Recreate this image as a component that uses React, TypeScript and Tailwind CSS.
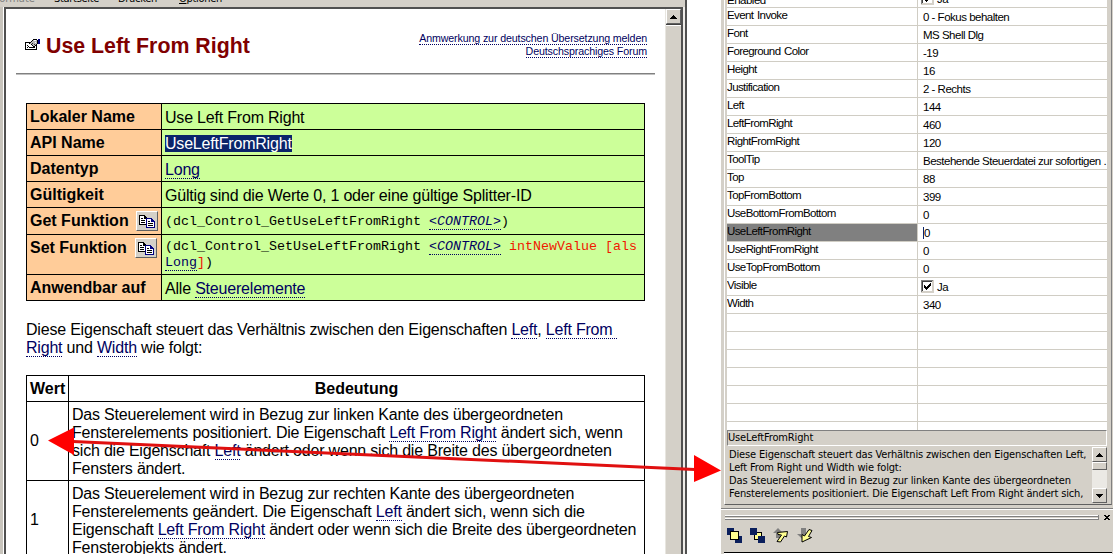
import React from 'react';

type Property = {
  name: string;
  value: string;
  checked?: boolean;
  selected?: boolean;
};

const properties: Property[] = [
  { name: 'Event Invoke', value: '0 - Fokus behalten' },
  { name: 'Font', value: 'MS Shell Dlg' },
  { name: 'Foreground Color', value: '-19' },
  { name: 'Height', value: '16' },
  { name: 'Justification', value: '2 - Rechts' },
  { name: 'Left', value: '144' },
  { name: 'LeftFromRight', value: '460' },
  { name: 'RightFromRight', value: '120' },
  { name: 'ToolTip', value: 'Bestehende Steuerdatei zur sofortigen .' },
  { name: 'Top', value: '88' },
  { name: 'TopFromBottom', value: '399' },
  { name: 'UseBottomFromBottom', value: '0' },
  { name: 'UseLeftFromRight', value: '0', selected: true },
  { name: 'UseRightFromRight', value: '0' },
  { name: 'UseTopFromBottom', value: '0' },
  { name: 'Visible', value: 'Ja', checked: true },
  { name: 'Width', value: '340' },
  { name: '', value: '' },
  { name: '', value: '' },
  { name: '', value: '' },
  { name: '', value: '' },
  { name: '', value: '' },
  { name: '', value: '' },
];

function Link({ children }: { children: React.ReactNode }) {
  return <span className="border-b border-dotted border-[#000060] text-[#000060]">{children}</span>;
}

function PropertyIcon() {
  return (
    <svg width="16" height="12" viewBox="0 0 16 12" shapeRendering="crispEdges">
      <path d="M0 3h12v8H0z" fill="#000" />
      <path d="M1 4h10v6H1z" fill="#fff" />
      <path d="M2 6h1v1H2zM2 8h1v1H2zM4 8h6v1H4zM3 7h1v1H3z" fill="#000" />
      <path d="M4 4h1V3h1V2h1V1h1V0h4v1h1v4h-1v1h-1v1h-1v1H8V7H7V6H6V5H4z" fill="#000" />
      <path d="M5 4h1V3h1V2h1V1h4v4h-1v1h-1v1H8V6H7V5H5z" fill="#b8b8b8" />
      <path d="M7 4h1v1H7zM9 5h1v1H9z" fill="#303030" />
      <path d="M9 1h2v1H9zM10 3h1v1h-1z" fill="#fff" />
      <path d="M13 0h2v5h-2z" fill="#000080" />
    </svg>
  );
}

function CopyButton() {
  return (
    <span className="flex h-5 w-[22px] shrink-0 items-center justify-center border border-t-white border-r-[#606060] border-b-[#606060] border-l-white bg-[#d4d0c8]">
      <svg width="16" height="13" viewBox="0 0 16 13" shapeRendering="crispEdges">
        <path d="M0 0h6v1h1v1h1v8H0z" fill="#000" />
        <path d="M1 1h4v3h2v5H1z" fill="#fff" />
        <path d="M2 3h2v1H2zM2 5h4v1H2zM2 7h4v1H2z" fill="#000" />
        <path d="M7 3h6v1h1v1h1v1h1v7H7z" fill="#000080" />
        <path d="M8 4h4v3h3v5H8z" fill="#fff" />
        <path d="M9 6h2v1H9zM9 8h5v1H9zM9 10h5v1H9z" fill="#000" />
      </svg>
    </span>
  );
}

function Checkbox() {
  return (
    <svg width="13" height="13" viewBox="0 0 13 13" shapeRendering="crispEdges" className="shrink-0">
      <path d="M0 0h13v13H0z" fill="#d4d0c8" />
      <path d="M0 0h12v1H1v11H0z" fill="#808080" />
      <path d="M1 1h10v1H2v9H1z" fill="#404040" />
      <path d="M2 2h9v9H2z" fill="#fff" />
      <path d="M3 5h1v1h1v1h1V6h1V5h1V4h1V3h1v3H9v1H8v1H7v1H6v1H5V9H4V8H3z" fill="#000" />
    </svg>
  );
}

function ScrollButton({ down = false }: { down?: boolean }) {
  return (
    <span className="flex h-[15px] w-[15px] shrink-0 items-center justify-center border border-t-white border-r-[#606060] border-b-[#606060] border-l-white bg-[#d4d0c8]">
      <svg width="7" height="4" viewBox="0 0 7 4" shapeRendering="crispEdges">
        {down ? (
          <path d="M0 0h7v1H6v1H5v1H4v1H3V3H2V2H1V1H0z" />
        ) : (
          <path d="M3 0h1v1h1v1h1v1h1v1H0V3h1V2h1V1h1z" />
        )}
      </svg>
    </span>
  );
}

function InfoRow({ label, height, button, children }: { label: string; height: string; button?: string; children: React.ReactNode }) {
  return (
    <div className={`flex border-b border-black ${height}`}>
      <div className="flex w-[135px] shrink-0 border-r border-black bg-[#ffcc99] pl-[3px] font-bold tracking-normal">
        <span className="pt-[4px]">{label}</span>
        {button && (
          <span className={button}>
            <CopyButton />
          </span>
        )}
      </div>
      <div className="grow bg-[#ccff99] pl-[3px]">{children}</div>
    </div>
  );
}

function HelpPage() {
  return (
    <div className="flex h-[545px] grow flex-col overflow-hidden bg-white pl-[10px] text-[16px] leading-[18px] tracking-[-0.2px] text-black">
      <div className="flex h-[64px] w-[639px] shrink-0 pl-[9px]">
        <div className="pt-[30px]">
          <PropertyIcon />
        </div>
        <h1 className="pt-[25px] pl-[5px] text-[21.33px] leading-6 font-bold tracking-normal whitespace-nowrap text-[#800000]">
          Use Left From Right
        </h1>
        <div className="ml-auto pt-[23px] pr-2 text-right text-[10.67px] leading-[13px] tracking-[-0.13px] whitespace-nowrap">
          <div>
            <Link>Anmwerkung zur deutschen Übersetzung melden</Link>
          </div>
          <div>
            <Link>Deutschsprachiges Forum</Link>
          </div>
        </div>
      </div>
      <div className="h-[2px] w-[639px] shrink-0 border-t border-[#808080] bg-[#c0c0c0]" />

      <div className="mt-[28px] ml-[10px] w-[619px] shrink-0 border border-b-0 border-black whitespace-nowrap">
        <InfoRow label="Lokaler Name" height="h-[26px]">
          <div className="pt-[5px]">Use Left From Right</div>
        </InfoRow>
        <InfoRow label="API Name" height="h-[26px]">
          <div className="pt-[5px]">
            <span className="bg-[#0a246a] text-white">UseLeftFromRight</span>
          </div>
        </InfoRow>
        <InfoRow label="Datentyp" height="h-[26px]">
          <div className="pt-[5px]">
            <Link>Long</Link>
          </div>
        </InfoRow>
        <InfoRow label="Gültigkeit" height="h-[26px]">
          <div className="pt-[5px]">Gültig sind die Werte 0, 1 oder eine gültige Splitter-ID</div>
        </InfoRow>
        <InfoRow label="Get Funktion" height="h-[27px]" button="ml-auto pt-[3px] pr-[3px]">
          <div className="pt-[6px] font-['Liberation_Mono'] text-[13.33px] leading-4 tracking-normal">
            (dcl_Control_GetUseLeftFromRight <Link><i>&lt;CONTROL&gt;</i></Link>)
          </div>
        </InfoRow>
        <InfoRow label="Set Funktion" height="h-[40px]" button="ml-auto pt-[3px] pr-[4px]">
          <div className="pt-[4px] font-['Liberation_Mono'] text-[13.33px] leading-4 tracking-normal">
            (dcl_Control_SetUseLeftFromRight <Link><i>&lt;CONTROL&gt;</i></Link>{' '}
            <span className="text-[#f01800]">intNewValue [als</span>
            <br />
            <Link>Long</Link>
            <span className="text-[#f01800]">]</span>)
          </div>
        </InfoRow>
        <InfoRow label="Anwendbar auf" height="h-[26px]">
          <div className="pt-[5px]">
            Alle <Link>Steuerelemente</Link>
          </div>
        </InfoRow>
      </div>

      <p className="mt-[20px] ml-[10px] shrink-0 whitespace-nowrap">
        Diese Eigenschaft steuert das Verhältnis zwischen den Eigenschaften <Link>Left</Link>, <Link>Left From&nbsp;</Link>
        <br />
        <Link>Right</Link> und <Link>Width</Link> wie folgt:
      </p>

      <div className="mt-[18px] ml-[10px] w-[619px] shrink-0 border border-b-0 border-black whitespace-nowrap">
        <div className="flex h-[26px] border-b border-black font-bold tracking-normal">
          <div className="w-[42px] shrink-0 border-r border-black pt-[4px] pl-[3px]">Wert</div>
          <div className="grow pt-[4px] text-center">Bedeutung</div>
        </div>
        <div className="flex h-[79px] border-b border-black">
          <div className="flex w-[42px] shrink-0 items-center border-r border-black pl-[3px]">0</div>
          <div className="pt-[4px] pl-[3px]">
            Das Steuerelement wird in Bezug zur linken Kante des übergeordneten
            <br />
            Fensterelements positioniert. Die Eigenschaft <Link>Left From Right</Link> ändert sich, wenn
            <br />
            sich die Eigenschaft <Link>Left</Link> ändert oder wenn sich die Breite des übergeordneten
            <br />
            Fensters ändert.
          </div>
        </div>
        <div className="flex h-[79px] border-b border-black">
          <div className="flex w-[42px] shrink-0 items-center border-r border-black pl-[3px]">1</div>
          <div className="pt-[4px] pl-[3px]">
            Das Steuerelement wird in Bezug zur rechten Kante des übergeordneten
            <br />
            Fensterelements geändert. Die Eigenschaft <Link>Left</Link> ändert sich, wenn sich die
            <br />
            Eigenschaft <Link>Left From Right</Link> ändert oder wenn sich die Breite des übergeordneten
            <br />
            Fensterobjekts ändert.
          </div>
        </div>
      </div>
    </div>
  );
}

function HelpWindow() {
  return (
    <div className="flex w-[687px] shrink-0 flex-col border-r-2 border-[#505050] bg-[#d4d0c8]">
      <div className="flex h-[7px] shrink-0 overflow-hidden font-['DejaVu_Sans_Condensed'] text-[11px] leading-[13px] whitespace-nowrap">
        <span className="-mt-[8px] -ml-[6px] w-[60px] text-[#808080]">Formate</span>
        <span className="-mt-[8px] w-[64px] tracking-[-0.3px]">Startseite</span>
        <span className="-mt-[8px] w-[61px] tracking-[-0.3px]">Drucken</span>
        <span className="-mt-[8px] tracking-[-0.3px]">
          <u>O</u>ptionen
        </span>
      </div>
      <div className="flex grow">
        <div className="w-[4px] shrink-0 border-r border-white bg-[#c8c4bc]" />
        <div className="flex w-[679px] shrink-0 border-t-2 border-r-2 border-l-2 border-[#505050]">
          <HelpPage />
          <div className="flex w-4 shrink-0 flex-col border-l border-[#e8e6e0] bg-[#d4d0c8]">
            <ScrollButton />
            <div className="h-[2px] border-t border-[#404040] bg-white" />
          </div>
        </div>
        <div className="w-[2px] bg-[#eeece8]" />
      </div>
    </div>
  );
}

function PropertyGrid() {
  return (
    <div className="h-[430px] w-[380px] overflow-hidden bg-white font-['Liberation_Sans'] text-[11.5px] leading-[14px] tracking-[-0.5px] whitespace-nowrap">
      <div className="flex h-2 border-b border-[#d0cdc4]">
        <div className="-mt-[7px] h-[14px] w-[191px] shrink-0 border-r border-[#d0cdc4]">Enabled</div>
        <div className="-mt-[8px] flex pl-[3px]">
          <Checkbox />
          <span className="pl-[3px]">Ja</span>
        </div>
      </div>
      {properties.map((property, index) => (
        <div key={index} className="flex h-[18px] border-b border-[#d0cdc4]">
          <div
            className={`w-[191px] shrink-0 border-r border-[#d0cdc4] tracking-[-0.6px] [word-spacing:1px] ${property.selected ? 'bg-[#808080]' : ''}`}
          >
            {property.name}
          </div>
          {property.checked ? (
            <div className="flex pt-[2px] pl-[3px]">
              <Checkbox />
              <span className="pl-[3px]">{property.value}</span>
            </div>
          ) : (
            <div className="pt-[2px] pl-[5px]">
              <span className={property.selected ? 'border-l border-[#0a246a]' : ''}>{property.value}</span>
            </div>
          )}
        </div>
      ))}
      <div className="ml-[190px] h-2 w-px bg-[#d0cdc4]" />
    </div>
  );
}

function Description() {
  return (
    <div className="w-[380px] font-['DejaVu_Sans_Condensed'] text-[11px] leading-[13px] whitespace-nowrap">
      <div className="h-4 border border-t-[#808080] border-r-white border-b-white border-l-[#808080] tracking-[-0.15px]">UseLeftFromRight</div>
      <div className="flex h-[57px] pt-[1px]">
        <div className="grow overflow-hidden pt-[1px] pl-[2px] tracking-[-0.15px]">
          <div>Diese Eigenschaft steuert das Verhältnis zwischen den Eigenschaften Left,</div>
          <div>Left From Right und Width wie folgt:</div>
          <div>Das Steuerelement wird in Bezug zur linken Kante des übergeordneten</div>
          <div>Fensterelements positioniert. Die Eigenschaft Left From Right ändert sich,</div>
        </div>
        <div className="flex w-[15px] shrink-0 flex-col bg-[#ebe9e4]">
          <ScrollButton />
          <div className="h-2 border border-t-white border-r-[#606060] border-b-[#606060] border-l-white bg-[#d4d0c8]" />
          <div className="mt-auto flex">
            <ScrollButton down />
          </div>
        </div>
      </div>
    </div>
  );
}

function BringToFrontIcon() {
  return (
    <svg width="15" height="15" viewBox="0 0 15 15" shapeRendering="crispEdges">
      <path d="M0 0h7v7H0zM8 8h7v7H8z" fill="#0a1f5c" />
      <path d="M3 3h9v9H3z" fill="#000" />
      <path d="M4 4h7v7H4z" fill="#ffff90" />
    </svg>
  );
}

function SendToBackIcon() {
  return (
    <svg width="15" height="15" viewBox="0 0 15 15" shapeRendering="crispEdges">
      <path d="M4 4h8v8H4z" fill="#000" />
      <path d="M5 5h6v6H5z" fill="#ffff90" />
      <path d="M0 0h7v7H0zM8 8h7v7H8z" fill="#0a1f5c" />
    </svg>
  );
}

function MoveUpIcon() {
  return (
    <svg width="16" height="15" viewBox="0 0 16 15">
      <path d="M0 5l5-5 5 5H7v5H3V5z" fill="#808080" />
      <path d="M4.500 4.500l10-1-1 5.500-2-1-4 6-3.500-.5 4.500-6.500-3.500-.5z" fill="#ffff90" stroke="#000" />
    </svg>
  );
}

function MoveDownIcon() {
  return (
    <svg width="16" height="15" viewBox="0 0 16 15">
      <path d="M4 0h5v6h3l-5.500 6L0 6h4z" fill="#808080" />
      <path d="M12 1.500l3 1-3.500 6 3 1-9.500 4.500v-7.500l2.500 1.500z" fill="#ffff90" stroke="#000" />
    </svg>
  );
}

function PropertyPanel() {
  return (
    <div className="flex w-[392px] shrink-0 flex-col bg-[#d4d0c8] pl-[3px]">
      <div className="h-[505px] w-[388px] shrink-0 border-r border-b border-l border-r-[#808080] border-b-[#606060] border-l-white pl-[2px]">
        <PropertyGrid />
        <Description />
      </div>
      <div className="mt-[3px] -ml-[3px] h-[2px] shrink-0 border-t border-[#808080] bg-white" />
      <div className="flex h-[15px] shrink-0 items-center pl-px">
        <div className="flex w-[374px] flex-col border-r border-[#808080]">
          <div className="h-[2px] border-b border-[#808080] bg-white" />
          <div className="mt-px h-[2px] border-b border-[#808080] bg-white" />
        </div>
        <svg width="6" height="5" viewBox="0 0 6 5" shapeRendering="crispEdges" className="ml-[5px]">
          <path d="M0 0h2v1h2V0h2v1H5v1H4v1h1v1h1v1H4V4H2v1H0V4h1V3h1V2H1V1H0z" />
        </svg>
      </div>
      <div className="flex h-[27px] shrink-0 gap-2 pt-[3px] pl-[3px]">
        <BringToFrontIcon />
        <SendToBackIcon />
        <MoveUpIcon />
        <MoveDownIcon />
      </div>
      <div className="h-[3px] w-[388px] border-t border-black bg-white" />
    </div>
  );
}

export default function App() {
  return (
    <div className="relative flex h-[554px] w-[1113px] justify-between overflow-hidden bg-white font-['Liberation_Sans',sans-serif] text-black">
      <HelpWindow />
      <PropertyPanel />
      {/* Arrow linking the value table with the property description */}
      <svg className="pointer-events-none absolute inset-0" width="1113" height="554" viewBox="0 0 1113 554">
        <path d="M73 441.500L695 469.500" stroke="#e01010" strokeWidth="3" />
        <path d="M48 440.500L74 427.500V455zM721 470.500L694 455V482z" fill="#ff0000" />
      </svg>
    </div>
  );
}
